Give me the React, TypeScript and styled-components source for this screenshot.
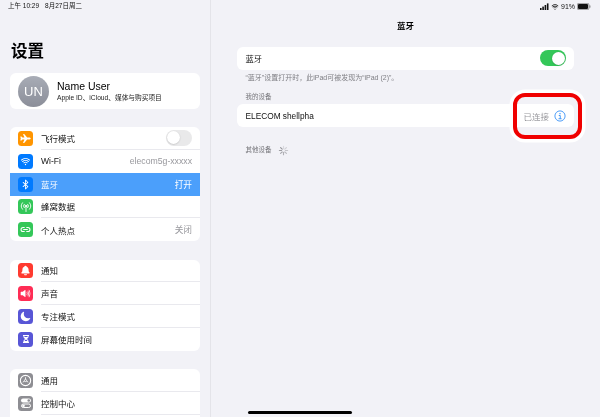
import React from "react";
import styled, { createGlobalStyle } from "styled-components";
import { IoAirplane, IoWifi, IoBluetooth, IoNotifications, IoVolumeHigh, IoMoon, IoLink } from "react-icons/io5";
import { FaHourglassHalf } from "react-icons/fa";

const Global = createGlobalStyle`
  html, body { margin: 0; padding: 0; background: #f2f2f7; }
  body { font-family: "Liberation Sans", "Noto Sans CJK SC", sans-serif; }
`;

const CJK = `"Liberation Sans", "Noto Sans CJK SC", sans-serif`;

const Screen = styled.div`
  position: relative;
  width: 600px;
  height: 417px;
  overflow: hidden;
  display: flex;
  background: #f2f2f7;
  color: #111;
  font-family: ${CJK};
  filter: blur(0.2px);
`;

const Sidebar = styled.aside`
  flex: 0 0 211px;
  height: 417px;
  box-sizing: border-box;
  border-right: 1px solid #e4e4e9;
  padding: 0 10px;
  overflow: hidden;
`;

const StatusLeft = styled.div`
  height: 13px;
  margin-left: -2px;
  font-size: 6.5px;
  line-height: 12px;
  display: flex;
  gap: 6px;
  color: #111;
`;

const LargeTitle = styled.h1`
  margin: 28px 0 0 1px;
  height: 32px;
  font-size: 16.5px;
  line-height: 20px;
  font-weight: 700;
  color: #000;
`;

const Profile = styled.div`
  height: 36px;
  margin-bottom: 18px;
  background: #fff;
  border-radius: 6px;
  display: flex;
  align-items: center;
  padding-left: 8px;
  gap: 8px;
`;

const Avatar = styled.div`
  width: 31px;
  height: 31px;
  border-radius: 50%;
  background: linear-gradient(#a8acb6, #8b8e99);
  color: #fff;
  font-size: 13px;
  display: flex;
  align-items: center;
  justify-content: center;
`;

const ProfileText = styled.div`
  display: flex;
  flex-direction: column;
`;

const ProfileName = styled.div`
  font-size: 10.5px;
  line-height: 13px;
  color: #000;
`;

const ProfileSub = styled.div`
  font-size: 6.7px;
  line-height: 9px;
  color: #222;
`;

const Group = styled.div`
  background: #fff;
  border-radius: 6px;
  overflow: hidden;
  margin-bottom: 18.3px;
`;

const Row = styled.div<{ $active?: boolean }>`
  height: 22.85px;
  display: flex;
  align-items: center;
  padding-left: 8px;
  gap: 8px;
  background: ${(p) => (p.$active ? "#4b9ffb" : "transparent")};
  color: ${(p) => (p.$active ? "#fff" : "#111")};
`;

const RowMain = styled.div<{ $line?: boolean }>`
  flex: 1;
  height: 100%;
  display: flex;
  align-items: center;
  justify-content: space-between;
  padding-right: 8px;
  box-sizing: border-box;
  font-size: 8.5px;
  border-bottom: ${(p) => (p.$line ? "1px solid #e9e9ee" : "none")};
`;

const RowValue = styled.span<{ $active?: boolean }>`
  font-size: 8.7px;
  color: ${(p) => (p.$active ? "#fff" : "#98989d")};
`;

const GroupTail = styled.div`
  height: 12px;
`;

const IconBox = styled.div<{ $bg: string }>`
  width: 15px;
  height: 15px;
  flex: none;
  border-radius: 3.5px;
  background: ${(p) => p.$bg};
  color: #fff;
  display: flex;
  align-items: center;
  justify-content: center;
  font-size: 11px;
`;

const Toggle = styled.div<{ $on?: boolean }>`
  width: 26px;
  height: 15.5px;
  border-radius: 8px;
  background: ${(p) => (p.$on ? "#34c759" : "#e9e9ea")};
  display: flex;
  justify-content: ${(p) => (p.$on ? "flex-end" : "flex-start")};
  align-items: center;
  padding: 1.2px;
  box-sizing: border-box;
`;

const Knob = styled.div`
  width: 13px;
  height: 13px;
  border-radius: 50%;
  background: #fff;
  box-shadow: 0 0.5px 1.5px rgba(0, 0, 0, 0.2);
`;

const Detail = styled.main`
  flex: 1;
  padding: 0 26px;
  position: relative;
`;

const StatusRight = styled.div`
  height: 13px;
  display: flex;
  justify-content: flex-end;
  align-items: center;
  gap: 2px;
  margin-right: -17px;
  font-size: 7px;
  color: #111;
`;

const NavTitle = styled.div`
  height: 24px;
  margin-top: 1px;
  margin-bottom: 8.5px;
  text-align: center;
  font-size: 8.5px;
  line-height: 24px;
  font-weight: 700;
  color: #000;
`;

const Card = styled.div`
  background: #fff;
  border-radius: 6px;
  height: 23px;
  display: flex;
  align-items: center;
  justify-content: space-between;
  padding: 0 8px 0 8.5px;
  font-size: 8.3px;
  color: #111;
`;

const Footnote = styled.div`
  margin: 3px 0 0 8.5px;
  height: 10px;
  font-size: 7px;
  line-height: 10px;
  color: #7f7f84;
`;

const SectionLabel = styled.div<{ $top: number }>`
  margin: ${(p) => p.$top}px 0 2.5px 8.5px;
  height: 10px;
  font-size: 6.5px;
  line-height: 10px;
  color: #77777c;
  display: flex;
  align-items: center;
  gap: 6px;
`;

const DeviceRight = styled.div`
  display: flex;
  align-items: center;
  gap: 5px;
  font-size: 8.5px;
  color: #98989d;
`;

const Callout = styled.div`
  position: absolute;
  left: 513px;
  top: 93px;
  width: 69px;
  height: 46px;
  box-sizing: border-box;
  border: 4px solid #f00000;
  border-radius: 12px;
  box-shadow: 0 0 0 3.5px #fff;
`;

const HomeBar = styled.div`
  position: absolute;
  left: 248px;
  bottom: 3px;
  width: 104px;
  height: 3px;
  border-radius: 2px;
  background: #000;
`;

const Cellular = () => (
  <svg width="12" height="12" viewBox="0 0 24 24" fill="none" stroke="#fff" strokeWidth="1.8" strokeLinecap="round">
    <circle cx="12" cy="10" r="1.6" fill="#fff" />
    <path d="M12 12v9M8.5 6.5a5 5 0 0 0 0 7M15.5 6.5a5 5 0 0 1 0 7M5 3.5a10 10 0 0 0 0 13M19 3.5a10 10 0 0 1 0 13" />
  </svg>
);

const GearDial = () => (
  <svg width="13" height="13" viewBox="0 0 24 24" fill="none" stroke="#fff">
    <circle cx="12" cy="12" r="9.5" strokeWidth="2" />
    <circle cx="12" cy="12" r="2" strokeWidth="1.5" />
    <path d="M12 10V6M10.5 13l-3.5 2M13.5 13l3.5 2" strokeWidth="1.6" />
  </svg>
);

const Switches = () => (
  <svg width="12" height="12" viewBox="0 0 24 24">
    <rect x="2" y="3" width="20" height="8" rx="4" fill="#fff" />
    <circle cx="17.5" cy="7" r="2.6" fill="#8e8e93" />
    <rect x="3" y="14" width="18" height="7" rx="3.5" fill="none" stroke="#fff" strokeWidth="2" />
    <circle cx="7" cy="17.5" r="2.6" fill="#fff" />
  </svg>
);

const Info = () => (
  <svg width="12" height="12" viewBox="0 0 24 24" fill="none" stroke="#2f8df5">
    <circle cx="12" cy="12" r="10.2" strokeWidth="1.7" />
    <circle cx="12" cy="7.3" r="1.4" fill="#2f8df5" stroke="none" />
    <path d="M9.5 11h3v6.5M9 17.5h6.2" strokeWidth="1.8" />
  </svg>
);

const Spinner = () => (
  <svg width="11" height="11" viewBox="0 0 24 24" stroke="#8e8e93" strokeWidth="2.4" strokeLinecap="round">
    {Array.from({ length: 8 }).map((_, i) => (
      <line key={i} x1="12" y1="3" x2="12" y2="8" opacity={0.25 + i * 0.1} transform={`rotate(${i * 45} 12 12)`} />
    ))}
  </svg>
);

const Signal = () => (
  <svg width="9" height="7" viewBox="0 0 9 7" fill="#111">
    <rect x="0" y="5" width="1.6" height="2" />
    <rect x="2.3" y="3.6" width="1.6" height="3.4" />
    <rect x="4.6" y="2" width="1.6" height="5" />
    <rect x="6.9" y="0.4" width="1.6" height="6.6" />
  </svg>
);

const Battery = () => (
  <svg width="14" height="7" viewBox="0 0 14 7">
    <rect x="0.3" y="0.3" width="11.6" height="6.4" rx="1.5" fill="none" stroke="#555" strokeWidth="0.6" />
    <rect x="1" y="1" width="10" height="5" rx="1" fill="#111" />
    <rect x="12.4" y="2.3" width="1" height="2.4" rx="0.5" fill="#777" />
  </svg>
);

type Item = { label: string; bg: string; icon: React.ReactNode; value?: string; toggle?: boolean; active?: boolean };

const connectivity: Item[] = [
  { label: "飞行模式", bg: "#ff9500", icon: <IoAirplane />, toggle: true },
  { label: "Wi-Fi", bg: "#007aff", icon: <IoWifi />, value: "elecom5g-xxxxx" },
  { label: "蓝牙", bg: "#007aff", icon: <IoBluetooth />, value: "打开", active: true },
  { label: "蜂窝数据", bg: "#34c759", icon: <Cellular /> },
  { label: "个人热点", bg: "#34c759", icon: <IoLink />, value: "关闭" },
];

const alerts: Item[] = [
  { label: "通知", bg: "#ff3b30", icon: <IoNotifications /> },
  { label: "声音", bg: "#ff2d55", icon: <IoVolumeHigh /> },
  { label: "专注模式", bg: "#5856d6", icon: <IoMoon /> },
  { label: "屏幕使用时间", bg: "#5856d6", icon: <FaHourglassHalf size={8} /> },
];

const system: Item[] = [
  { label: "通用", bg: "#8e8e93", icon: <GearDial /> },
  { label: "控制中心", bg: "#8e8e93", icon: <Switches /> },
];

const SettingsGroup = ({ items, continues }: { items: Item[]; continues?: boolean }) => (
  <Group>
    {items.map((it, i) => {
      const next = items[i + 1];
      const line = next ? !it.active && !next.active : !!continues;
      return (
        <Row key={it.label} $active={it.active}>
          <IconBox $bg={it.bg}>{it.icon}</IconBox>
          <RowMain $line={line}>
            <span>{it.label}</span>
            {it.value && <RowValue $active={it.active}>{it.value}</RowValue>}
            {it.toggle && (
              <Toggle>
                <Knob />
              </Toggle>
            )}
          </RowMain>
        </Row>
      );
    })}
    {continues && <GroupTail />}
  </Group>
);

export default function App() {
  return (
    <Screen>
      <Global />
      <Sidebar>
        <StatusLeft>
          <span>上午 10:29</span>
          <span>8月27日周二</span>
        </StatusLeft>
        <LargeTitle>设置</LargeTitle>
        <Profile>
          <Avatar>UN</Avatar>
          <ProfileText>
            <ProfileName>Name User</ProfileName>
            <ProfileSub>Apple ID、iCloud、媒体与购买项目</ProfileSub>
          </ProfileText>
        </Profile>
        <SettingsGroup items={connectivity} />
        <SettingsGroup items={alerts} />
        <SettingsGroup items={system} continues />
      </Sidebar>
      <Detail>
        <StatusRight>
          <Signal />
          <IoWifi size={8} />
          <span>91%</span>
          <Battery />
        </StatusRight>
        <NavTitle>蓝牙</NavTitle>
        <Card>
          <span>蓝牙</span>
          <Toggle $on>
            <Knob />
          </Toggle>
        </Card>
        <Footnote>“蓝牙”设置打开时，此iPad可被发现为“iPad (2)”。</Footnote>
        <SectionLabel $top={9}>我的设备</SectionLabel>
        <Card>
          <span>ELECOM shellpha</span>
          <DeviceRight>
            <span>已连接</span>
            <Info />
          </DeviceRight>
        </Card>
        <SectionLabel $top={18}>
          其他设备
          <Spinner />
        </SectionLabel>
      </Detail>
      <Callout />
      <HomeBar />
    </Screen>
  );
}
